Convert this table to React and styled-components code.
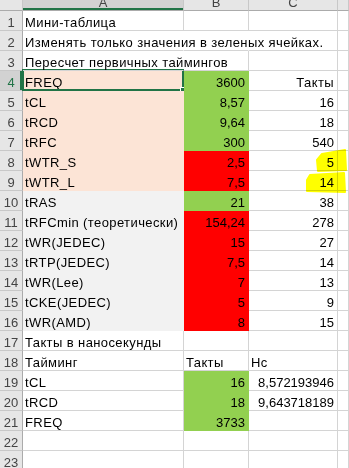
import React from 'react';
import styled, { createGlobalStyle } from 'styled-components';

const GREEN = '#92d050';
const RED = '#ff0000';
const PEACH = '#fce4d6';
const GRAY = '#f2f2f2';
const GRID = '#d4d4d4';
const EXCEL = '#217346';

const GlobalStyle = createGlobalStyle`
  html, body {
    margin: 0;
    padding: 0;
    background: #fff;
    overflow: hidden;
  }
  body {
    font-family: "Liberation Sans", Arial, sans-serif;
    font-size: 13px;
    color: #000;
  }
`;

const Sheet = styled.div`
  position: relative;
  width: 349px;
  height: 468px;
  overflow: hidden;
  display: grid;
  grid-template-columns: 23px 161px 65px 89px 1fr;
  grid-template-rows: 11px;
  grid-auto-rows: 20px;
`;

const Corner = styled.div`
  background: #e6e6e6;
  border-right: 1px solid #c8c8c8;
  border-bottom: 1px solid #ababab;
`;

const ColHead = styled.div`
  box-sizing: border-box;
  display: flex;
  align-items: flex-end;
  justify-content: center;
  overflow: hidden;
  line-height: 15px;
  color: #444;
  background: ${({ $active }) => ($active ? '#d2d2d2' : '#e6e6e6')};
  border-right: 1px solid #c8c8c8;
  border-bottom: 1px solid #ababab;
  box-shadow: ${({ $active }) => ($active ? `inset 0 -2px 0 ${EXCEL}` : 'none')};
`;

const RowNum = styled.div`
  box-sizing: border-box;
  display: flex;
  align-items: flex-end;
  justify-content: center;
  line-height: 15px;
  color: ${({ $active }) => ($active ? EXCEL : '#444')};
  background: ${({ $active }) => ($active ? '#d2d2d2' : '#e6e6e6')};
  border-right: 1px solid #ababab;
  border-bottom: 1px solid #c8c8c8;
  box-shadow: ${({ $active }) => ($active ? `inset -2px 0 0 ${EXCEL}` : 'none')};
`;

const Cell = styled.div`
  box-sizing: border-box;
  position: relative;
  z-index: ${({ $over }) => ($over ? 1 : 'auto')};
  display: flex;
  align-items: flex-end;
  justify-content: ${({ $align }) => ($align === 'right' ? 'flex-end' : 'flex-start')};
  padding: 0 3px 0 2px;
  line-height: 15px;
  letter-spacing: ${({ $num }) => ($num ? '0' : '0.4px')};
  white-space: nowrap;
  background: ${({ $bg }) => $bg || 'transparent'};
  border-bottom: 1px solid ${({ $bg }) => $bg || GRID};
  border-right: 1px solid
    ${({ $bg, $open }) => ($open ? 'transparent' : $bg || GRID)};
`;

const Selection = styled.div`
  position: absolute;
  left: -1px;
  right: -1px;
  top: -2px;
  bottom: -1px;
  border: 2px solid ${EXCEL};
  pointer-events: none;
`;

const Handle = styled.div`
  position: absolute;
  right: -5px;
  bottom: -5px;
  width: 5px;
  height: 5px;
  background: ${EXCEL};
  border: 1px solid #fff;
`;

const Ink = styled.svg`
  position: absolute;
  left: 0;
  top: 0;
  z-index: 3;
  pointer-events: none;
  mix-blend-mode: multiply;
`;

const rows = [
  { a: { t: 'Мини-таблица' } },
  { a: { t: 'Изменять только значения в зеленых ячейках.', over: true, open: true }, b: { open: true } },
  { a: { t: 'Пересчет первичных таймингов', over: true, open: true } },
  { a: { t: 'FREQ', bg: PEACH, sel: true }, b: { t: '3600', bg: GREEN }, c: { t: 'Такты', r: true } },
  { a: { t: 'tCL', bg: PEACH }, b: { t: '8,57', bg: GREEN }, c: { t: '16', r: true } },
  { a: { t: 'tRCD', bg: PEACH }, b: { t: '9,64', bg: GREEN }, c: { t: '18', r: true } },
  { a: { t: 'tRFC', bg: PEACH }, b: { t: '300', bg: GREEN }, c: { t: '540', r: true } },
  { a: { t: 'tWTR_S', bg: PEACH }, b: { t: '2,5', bg: RED }, c: { t: '5', r: true } },
  { a: { t: 'tWTR_L', bg: PEACH }, b: { t: '7,5', bg: RED }, c: { t: '14', r: true } },
  { a: { t: 'tRAS', bg: GRAY }, b: { t: '21', bg: GREEN }, c: { t: '38', r: true } },
  { a: { t: 'tRFCmin (теоретически)', bg: GRAY }, b: { t: '154,24', bg: RED }, c: { t: '278', r: true } },
  { a: { t: 'tWR(JEDEC)', bg: GRAY }, b: { t: '15', bg: RED }, c: { t: '27', r: true } },
  { a: { t: 'tRTP(JEDEC)', bg: GRAY }, b: { t: '7,5', bg: RED }, c: { t: '14', r: true } },
  { a: { t: 'tWR(Lee)', bg: GRAY }, b: { t: '7', bg: RED }, c: { t: '13', r: true } },
  { a: { t: 'tCKE(JEDEC)', bg: GRAY }, b: { t: '5', bg: RED }, c: { t: '9', r: true } },
  { a: { t: 'tWR(AMD)', bg: GRAY }, b: { t: '8', bg: RED }, c: { t: '15', r: true } },
  { a: { t: 'Такты в наносекунды' } },
  { a: { t: 'Тайминг' }, b: { t: 'Такты' }, c: { t: 'Нс' } },
  { a: { t: 'tCL' }, b: { t: '16', bg: GREEN }, c: { t: '8,572193946', r: true } },
  { a: { t: 'tRCD' }, b: { t: '18', bg: GREEN }, c: { t: '9,643718189', r: true } },
  { a: { t: 'FREQ' }, b: { t: '3733', bg: GREEN } },
  {},
  {},
];

const numeric = (t) => /^[\d,]+$/.test(t || '');

function SheetCell({ data = {} }) {
  const isNum = numeric(data.t);
  const right = data.r || isNum;
  return (
    <Cell
      $bg={data.bg}
      $align={right ? 'right' : 'left'}
      $num={isNum}
      $over={data.over}
      $open={data.open}
    >
      {data.t}
      {data.sel && (
        <Selection>
          <Handle />
        </Selection>
      )}
    </Cell>
  );
}

export default function App() {
  return (
    <>
      <GlobalStyle />
      <Sheet>
        <Corner />
        <ColHead $active>A</ColHead>
        <ColHead>B</ColHead>
        <ColHead>C</ColHead>
        <ColHead />
        {rows.map((row, i) => (
          <React.Fragment key={i}>
            <RowNum $active={i === 3}>{i + 1}</RowNum>
            <SheetCell data={row.a} />
            <SheetCell data={row.b} />
            <SheetCell data={row.c} />
            <SheetCell />
          </React.Fragment>
        ))}
        <Ink width="349" height="468" viewBox="0 0 349 468">
          <path
            d="M322 154 L345 150 L346 170 L318 171 L317 160 Z"
            fill="#ffff00"
            stroke="#ffff00"
            strokeWidth="2"
            strokeLinejoin="round"
          />
          <path
            d="M310 175 L344 173 L345 192 L307 191 L307 180 Z"
            fill="#ffff00"
            stroke="#ffff00"
            strokeWidth="2"
            strokeLinejoin="round"
          />
        </Ink>
      </Sheet>
    </>
  );
}
